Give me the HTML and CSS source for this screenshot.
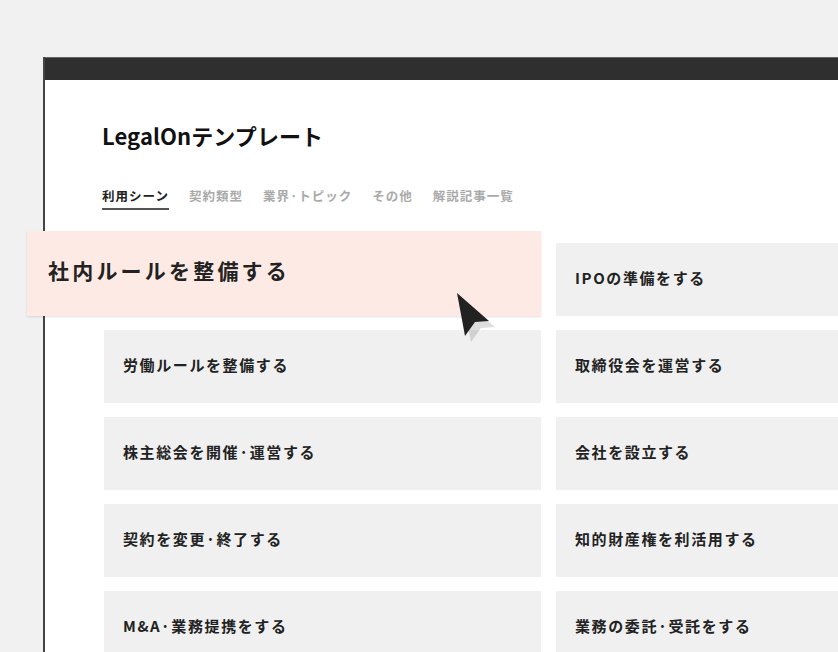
FILE: index.html
```html
<!DOCTYPE html>
<html lang="ja">
<head>
    <meta charset="UTF-8">
    <meta name="viewport" content="width=device-width, initial-scale=1.0">
    <title>LegalOnテンプレート</title>
    <link rel="stylesheet" href="styles.css">
</head>
<body>
    <div class="window">
        <div class="titlebar"></div>
        <div class="content">
            <h1 class="title">LegalOnテンプレート</h1>
            <nav class="tabs">
                <span class="tab active">利用シーン</span>
                <span class="tab">契約類型</span>
                <span class="tab">業界·トピック</span>
                <span class="tab">その他</span>
                <span class="tab">解説記事一覧</span>
            </nav>
            <div class="cards">
                <div class="card hover">社内ルールを整備する</div>
                <div class="card">IPOの準備をする</div>
                <div class="card">労働ルールを整備する</div>
                <div class="card">取締役会を運営する</div>
                <div class="card">株主総会を開催·運営する</div>
                <div class="card">会社を設立する</div>
                <div class="card">契約を変更·終了する</div>
                <div class="card">知的財産権を利活用する</div>
                <div class="card">M&amp;A·業務提携をする</div>
                <div class="card">業務の委託·受託をする</div>
            </div>
        </div>
    </div>

    <!-- mouse pointer over the hovered card -->
    <svg class="pointer" width="50" height="56" viewBox="0 0 50 56">
        <polygon points="8,8 40,36 26,37 16,51" fill="rgba(0,0,0,0.13)"/>
        <polygon points="2,2 34,30 20,31 10,45" fill="#222"/>
    </svg>
</body>
</html>
```

FILE: styles.css
```css
body {
    margin: 0;
    height: 652px;
    overflow: hidden;
    background-color: #f1f1f1;
    font-family: "Noto Sans CJK JP", "Noto Sans", sans-serif;
    color: #222;
}

.window {
    margin: 57px 0 0 43px;
    height: 595px;
    background-color: #fff;
    border-left: 2px solid #444;
}

.titlebar {
    height: 23px;
    background-color: #2f2f2f;
    border-top: 1px solid #666;
    box-sizing: border-box;
}

.content {
    padding: 40px 0 0 57px;
}

.title {
    margin: 0;
    font-size: 22px;
    line-height: 30px;
    font-weight: 600;
    letter-spacing: 0.1px;
    color: #111;
}

.tabs {
    display: flex;
    gap: 20px;
    margin-top: 36px;
}

.tab {
    font-size: 12.5px;
    line-height: 20px;
    font-weight: 700;
    letter-spacing: 1px;
    color: #aaa;
    padding-bottom: 2px;
    border-bottom: 2px solid transparent;
}

.tab.active {
    color: #222;
    border-bottom-color: #555;
}

.cards {
    display: grid;
    grid-template-columns: 437px 437px;
    grid-auto-rows: 73px;
    column-gap: 15px;
    row-gap: 14px;
    margin: 33px 0 0 2px;
}

.card {
    display: flex;
    align-items: center;
    padding: 0 0 4px 19px;
    background-color: #f0f0f0;
    font-size: 15px;
    font-weight: 700;
    letter-spacing: 1.6px;
    color: #222;
}

.card.hover {
    margin: -12px 0 0 -77px;
    padding: 0 0 8px 21px;
    background-color: #fdeae4;
    font-size: 21px;
    letter-spacing: 3.2px;
    box-shadow: 0 1px 2px rgba(0, 0, 0, 0.12);
}

.pointer {
    position: absolute;
    left: 455px;
    top: 291px;
}
```
